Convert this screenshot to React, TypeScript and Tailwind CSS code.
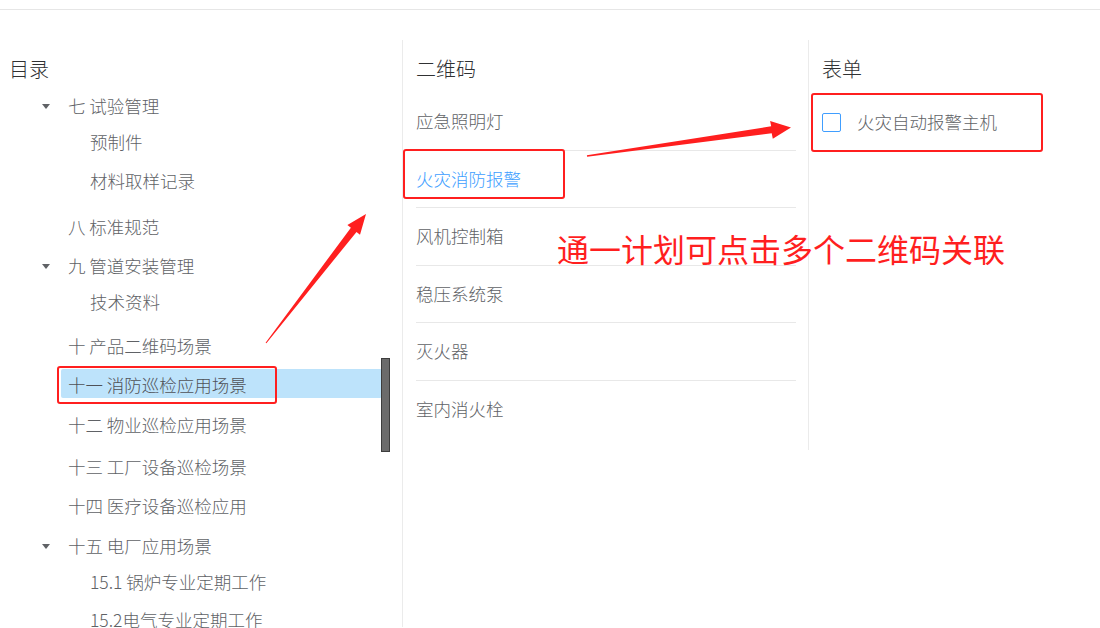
import React from 'react'

type TreeRow = {
  label: string
  level: 'parent' | 'plain' | 'child'
  caret?: boolean
  active?: boolean
  mt: string
}

const treeRows: TreeRow[] = [
  { label: '七 试验管理', level: 'parent', caret: true, mt: 'mt-[9px]' },
  { label: '预制件', level: 'child', mt: 'mt-[8px]' },
  { label: '材料取样记录', level: 'child', mt: 'mt-[11px]' },
  { label: '八 标准规范', level: 'plain', mt: 'mt-[18px]' },
  { label: '九 管道安装管理', level: 'parent', caret: true, mt: 'mt-[11px]' },
  { label: '技术资料', level: 'child', mt: 'mt-[8px]' },
  { label: '十 产品二维码场景', level: 'plain', mt: 'mt-[16px]' },
  { label: '十一 消防巡检应用场景', level: 'plain', active: true, mt: 'mt-[9px]' },
  { label: '十二 物业巡检应用场景', level: 'plain', mt: 'mt-[13px]' },
  { label: '十三 工厂设备巡检场景', level: 'plain', mt: 'mt-[14px]' },
  { label: '十四 医疗设备巡检应用', level: 'plain', mt: 'mt-[11px]' },
  { label: '十五 电厂应用场景', level: 'parent', caret: true, mt: 'mt-[12px]' },
  { label: '15.1 锅炉专业定期工作', level: 'child', mt: 'mt-[8px]' },
  { label: '15.2电气专业定期工作', level: 'child', mt: 'mt-[10px]' },
]

const qrItems = ['应急照明灯', '火灾消防报警', '风机控制箱', '稳压系统泵', '灭火器', '室内消火栓']

function Caret() {
  return (
    <svg width="8" height="5" viewBox="0 0 8 5">
      <path d="M0 0 L8 0 L4 5 Z" fill="#606266" />
    </svg>
  )
}

function TreeItem({ row }: { row: TreeRow }) {
  if (row.active) {
    return (
      <div className={`${row.mt} ml-[51px] w-[321px] h-[29px] pt-[3px] pl-[7px] leading-[26px] rounded-[2px] bg-[#bde3fb] text-[#4f5157] whitespace-nowrap`}>
        {row.label}
      </div>
    )
  }
  if (row.level === 'child') {
    return <div className={`${row.mt} h-[28px] leading-[28px] pl-[80px] whitespace-nowrap`}>{row.label}</div>
  }
  return (
    <div className={`${row.mt} h-[28px] flex items-center whitespace-nowrap`}>
      <div className="ml-[26px] w-[20px] flex justify-center">{row.caret && <Caret />}</div>
      <span className="ml-[12px] leading-[28px]">{row.label}</span>
    </div>
  )
}

export default function App() {
  return (
    <div className="relative w-[1100px] h-[628px] overflow-hidden bg-white text-[#606266] text-[17.5px] font-light font-['Noto_Sans_CJK_SC',sans-serif]">
      <div className="h-[10px] border-b border-[#e6e6e6]" />

      <div className="flex pt-[30px]">
        {/* 目录 */}
        <div className="w-[402px] shrink-0 pl-[10px]">
          <div className="mt-[15px] -ml-[1px] h-[28px] leading-[28px] text-[20px] text-[#303133]">目录</div>
          {treeRows.map((row) => (
            <TreeItem key={row.label} row={row} />
          ))}
        </div>

        {/* 二维码 */}
        <div className="w-[406px] h-[587px] shrink-0 border-l border-[#ebebeb] pl-[13px] pr-[12px]">
          <div className="mt-[15px] h-[28px] leading-[28px] text-[20px] text-[#303133]">二维码</div>
          <div className="mt-[10px]">
            {qrItems.map((item, i) => (
              <div
                key={item}
                className={`h-[57.5px] flex items-center ${i < qrItems.length - 1 ? 'border-b border-[#e8e8e8]' : ''} ${item === '火灾消防报警' ? 'text-[#409eff]' : ''}`}
              >
                {item}
              </div>
            ))}
          </div>
        </div>

        {/* 表单 */}
        <div className="w-[292px] h-[410px] shrink-0 border-l border-[#ebebeb] pl-[13px]">
          <div className="mt-[15px] h-[28px] leading-[28px] text-[20px] text-[#303133]">表单</div>
          <div className="mt-[29px] h-[20px] flex items-center">
            <span className="w-[19px] h-[19px] border border-[#409eff] rounded-[2px] bg-white" />
            <span className="ml-[16px] whitespace-nowrap">火灾自动报警主机</span>
          </div>
        </div>
      </div>

      {/* scrollbar thumb */}
      <div className="absolute left-[381px] top-[358px] w-[9px] h-[94px] bg-[#6b6b6b] border border-[#3d3d3d]" />

      {/* annotations */}
      <div className="absolute left-[57px] top-[366px] w-[220px] h-[38px] border-2 border-[#ff1f1f] rounded-[3px]" />
      <div className="absolute left-[403px] top-[149px] w-[162px] h-[50px] border-2 border-[#ff1f1f] rounded-[3px]" />
      <div className="absolute left-[811px] top-[93px] w-[232px] h-[59px] border-2 border-[#ff1f1f] rounded-[3px]" />
      <div className="absolute left-[557px] top-[228px] text-[32px] leading-[40px] font-normal text-[#ff1f1f] whitespace-nowrap">
        通一计划可点击多个二维码关联
      </div>
      <svg className="absolute left-0 top-0 pointer-events-none" width="1100" height="628">
        <polygon
          points="265.6,342.7 350.9,227.7 347.4,224.9 366,214 360,234.7 356.5,231.9 266.4,343.3"
          fill="#ff1f1f"
        />
        <polygon
          points="586.9,155.3 771.2,126.3 770.1,120.9 791,127.5 772.8,138.7 771.7,133.3 587.1,156.7"
          fill="#ff1f1f"
        />
      </svg>
    </div>
  )
}
